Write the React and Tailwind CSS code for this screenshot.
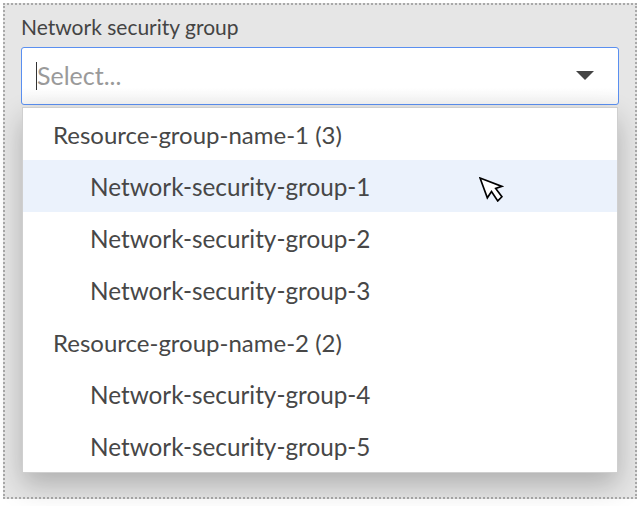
import { useState } from 'react';

const groups = [
    { name: 'Resource-group-name-1 (3)', items: ['Network-security-group-1', 'Network-security-group-2', 'Network-security-group-3'] },
    { name: 'Resource-group-name-2 (2)', items: ['Network-security-group-4', 'Network-security-group-5'] },
];

function Cursor() {
    return (
        <svg width="25" height="25" viewBox="0 0 24 24" className="absolute left-[456px] top-[17px]">
            <polygon
                points="1,1 8,20 12,14 18,23 22,19 16,11 22,9"
                fill="white"
                stroke="black"
                strokeWidth="1.6"
                strokeLinejoin="miter"
            />
        </svg>
    );
}

export default function App() {
    const [hovered, setHovered] = useState('Network-security-group-1');

    return (
        <div className="min-h-[506px] bg-white p-[3px] font-['Lato',sans-serif]">
            <div className="h-[496px] border-2 border-dotted border-[#a9a9a9] bg-[#e6e6e6] px-4 pt-[10px]">
                <label className="block text-[21px] leading-6 text-[#444]">Network security group</label>

                <div className="mt-2 flex h-[58px] items-center rounded-[3px] border-[1.5px] border-[#5a8ff0] bg-gradient-to-b from-white from-70% to-[#f4f4f4] pl-[14px] pr-6">
                    <span className="h-[28px] w-px bg-[#333]" />
                    <span className="flex-1 text-[25px] text-[#9a9a9a]">Select...</span>
                    <svg width="18" height="10" viewBox="0 0 18 10">
                        <polygon points="0,0 18,0 9,9" fill="#444" />
                    </svg>
                </div>

                {/* Menu */}
                <div className="relative mx-px mt-[2px] border border-[#cfcfcf] bg-white shadow-[0_12px_26px_rgba(0,0,0,0.24)]">
                    {groups.map((group) => (
                        <div key={group.name}>
                            <div className="flex h-[52px] items-center pl-[30px] pt-px text-[24px] text-[#474747]">{group.name}</div>
                            {group.items.map((item) => (
                                <div
                                    key={item}
                                    onMouseEnter={() => setHovered(item)}
                                    className={`relative flex h-[52px] items-center pl-[67px] pt-[2px] text-[24.3px] text-[#474747] ${hovered === item ? 'bg-[#ebf2fc]' : ''}`}
                                >
                                    <span>{item}</span>
                                    {item === 'Network-security-group-1' && <Cursor />}
                                </div>
                            ))}
                        </div>
                    ))}
                </div>
            </div>
        </div>
    );
}
